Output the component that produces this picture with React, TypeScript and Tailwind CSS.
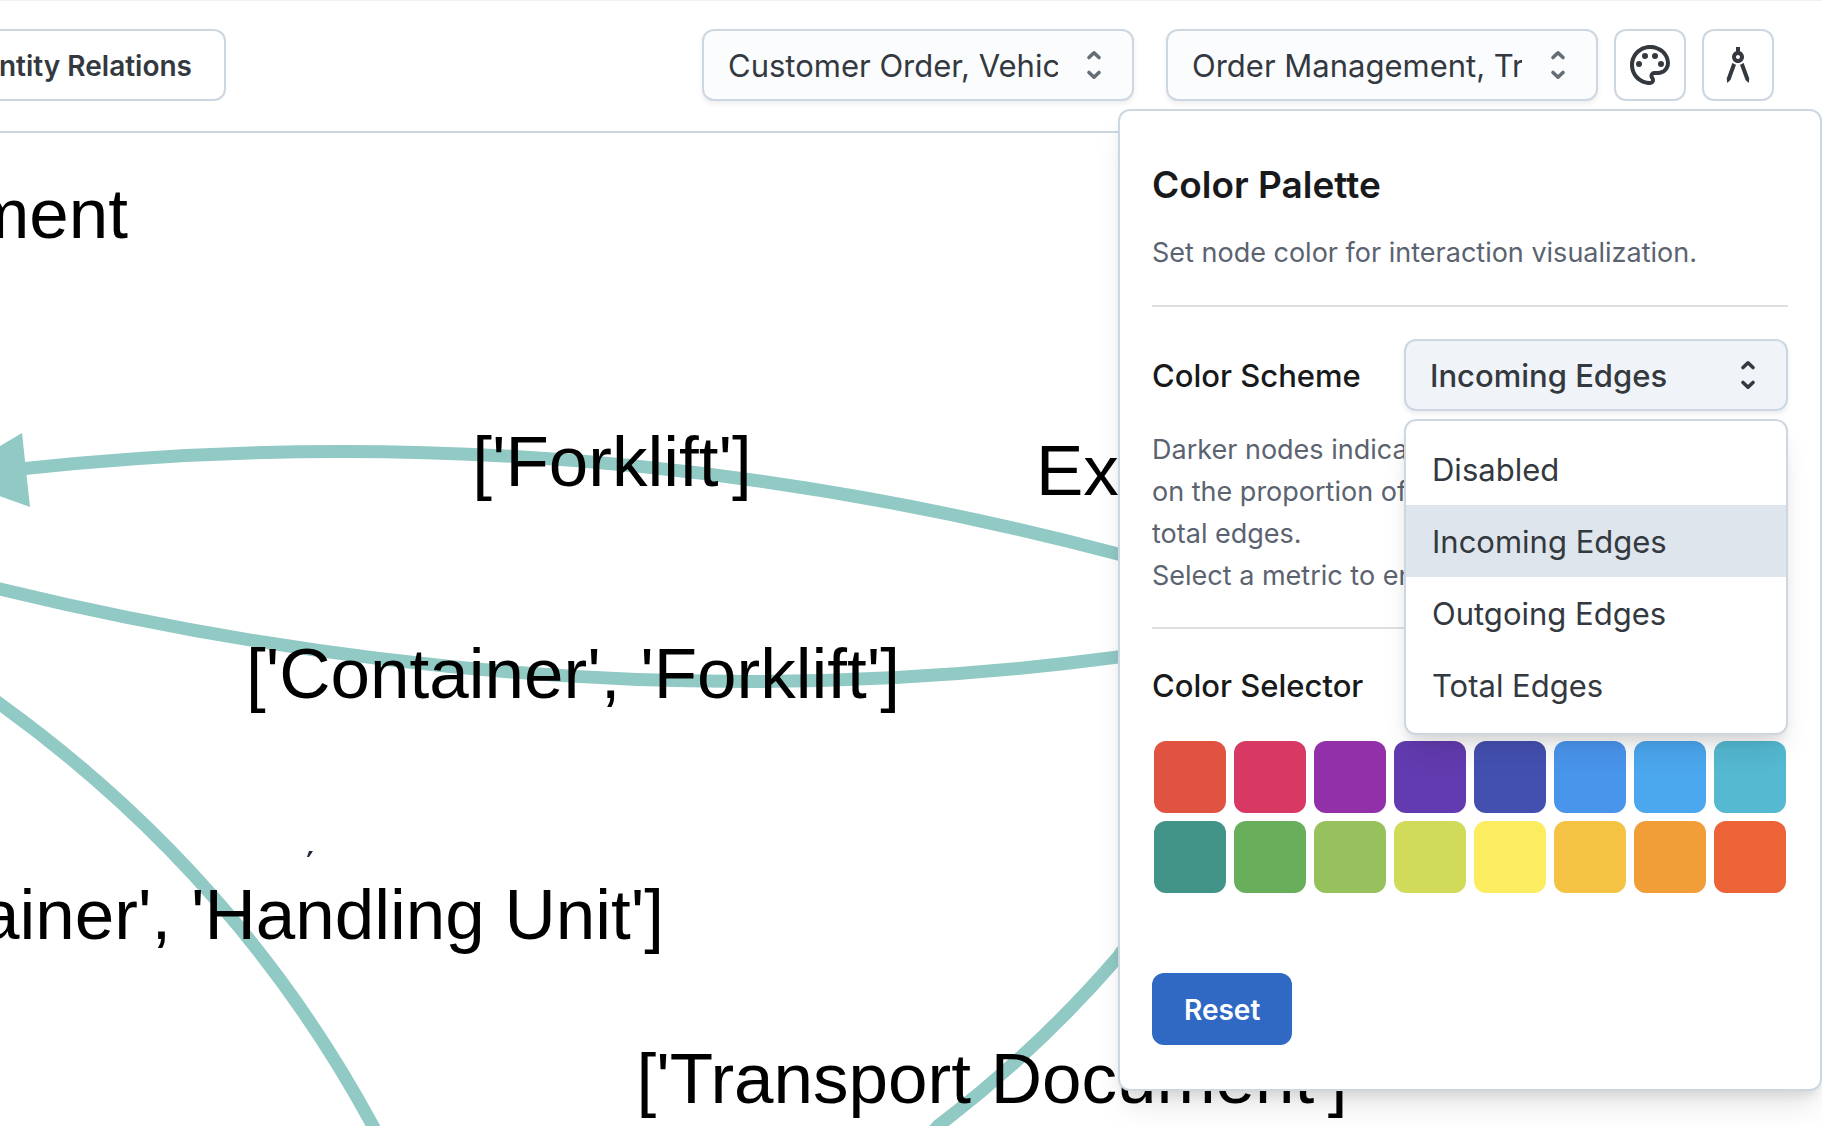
import { useState } from "react";
import { MdArchitecture, MdOutlinePalette } from "react-icons/md";

const EDGE = "#91c9c4";

const swatches = [
  { name: "Red", value: "#e15341" },
  { name: "Pink", value: "#d73964" },
  { name: "Purple", value: "#9130a9" },
  { name: "Deep purple", value: "#623bb0" },
  { name: "Indigo", value: "#4450b0" },
  { name: "Blue", value: "#4995ec" },
  { name: "Light blue", value: "#4ba7ee" },
  { name: "Cyan", value: "#54b9d1" },
  { name: "Teal", value: "#429488" },
  { name: "Green", value: "#68ae5b" },
  { name: "Light green", value: "#97c15d" },
  { name: "Lime", value: "#d0dc59" },
  { name: "Yellow", value: "#fcec60" },
  { name: "Amber", value: "#f5c344" },
  { name: "Orange", value: "#f19e38" },
  { name: "Deep orange", value: "#ec6337" },
];

const schemes = ["Disabled", "Incoming Edges", "Outgoing Edges", "Total Edges"];

function UpDown() {
  return (
    <svg
      viewBox="0 0 20 32"
      className="h-8 w-5"
      fill="none"
      stroke="currentColor"
      strokeWidth="3.6"
      strokeLinecap="round"
      strokeLinejoin="round"
      aria-hidden="true"
    >
      <path d="M5 8.500L10 3.800L15 8.500M5 23.500L10 28.200L15 23.500" />
    </svg>
  );
}

function FilterSelect({ label, value }: { label: string; value: string }) {
  return (
    <div className="relative w-[432px]">
      <select
        aria-label={label}
        defaultValue={value}
        className="h-[72px] w-full appearance-none rounded-xl border-2 border-[#cdd7e2] bg-[#fbfcfe] pt-0.5 pr-[74px] pl-6 text-[31px] text-[#33393f] shadow-[0_3px_5px_rgba(0,0,0,0.07)]"
      >
        <option>{value}</option>
      </select>
      <span className="pointer-events-none absolute inset-y-0 right-[30px] flex items-center text-[#656d75]">
        <UpDown />
      </span>
    </div>
  );
}

function IconButton({ label, children }: { label: string; children: React.ReactNode }) {
  return (
    <button
      type="button"
      aria-label={label}
      className="flex size-[72px] items-center justify-center rounded-xl border-2 border-[#cdd7e2] bg-white text-[#33393f]"
    >
      {children}
    </button>
  );
}

function Graph() {
  return (
    <svg
      className="absolute inset-0 size-full"
      fontFamily='"Liberation Sans", Arial, sans-serif'
      fontSize="71"
      role="img"
      aria-label="Entity relation graph"
    >
      <g transform="translate(0 -133)">
        <g fill="none" stroke={EDGE} strokeWidth="13">
          <path d="M20 469Q571 409 1118 554L1300 604" />
          <path d="M-20 584L0 589Q577 729 1118 657L1200 645" />
          <path d="M-20 690L0 704Q237 875 373 1126L384 1150" />
          <path d="M915 1152L938 1126Q1038 1050 1118 957L1150 912" />
        </g>
        <path d="M22 433L30 507L-53 477Z" fill={EDGE} />
        <g fill="#000">
          <text x="128" y="238" textAnchor="end">Transport Document</text>
          <text x="612" y="486" textAnchor="middle">['Forklift']</text>
          <text x="1036" y="495">Export</text>
          <text x="573" y="698" textAnchor="middle">['Container', 'Forklift']</text>
          <text x="664" y="939" textAnchor="end">['Container', 'Handling Unit']</text>
          <text x="992" y="1103" textAnchor="middle">['Transport Document']</text>
        </g>
        <path d="M309 851H313L309 857H307Z" fill="#1e293b" />
      </g>
    </svg>
  );
}

function PalettePanel() {
  const [scheme, setScheme] = useState("Incoming Edges");
  return (
    <section
      aria-labelledby="palette-title"
      className="absolute top-[109px] right-0 z-10 flex w-[704px] flex-col rounded-xl border-2 border-[#cdd7e2] bg-white px-8 pt-12 pb-11 shadow-[0_20px_30px_-6px_rgba(0,0,0,0.1),0_8px_12px_-4px_rgba(0,0,0,0.1)]"
    >
      <h2 id="palette-title" className="text-[37px] leading-[52px] font-semibold text-[#18191b]">
        Color Palette
      </h2>
      <p className="mt-[22px] text-[27px] leading-10 text-[#5b6370]">
        Set node color for interaction visualization.
      </p>
      <hr className="mt-8 border-t-2 border-[#dedfe1]" />

      <div className="mt-8 flex items-center justify-between">
        <label htmlFor="scheme" className="pt-0.5 text-[31px] font-medium text-[#18191b]">
          Color Scheme
        </label>
        <div className="relative w-96">
          <select
            id="scheme"
            value={scheme}
            onChange={(e) => setScheme(e.target.value)}
            className="h-[72px] w-full appearance-none rounded-xl border-2 border-[#cdd7e2] bg-[#f0f3f8] px-6 pt-0.5 text-[31px] font-medium text-[#33393f] shadow-[0_3px_5px_rgba(0,0,0,0.07)]"
          >
            {schemes.map((s) => (
              <option key={s}>{s}</option>
            ))}
          </select>
          <span className="pointer-events-none absolute inset-y-0 right-[30px] flex items-center text-[#33393f]">
            <UpDown />
          </span>
          <ul
            role="listbox"
            aria-label="Color Scheme"
            className="absolute top-full right-0 left-0 z-20 mt-2 rounded-xl border-2 border-[#cdd7e2] bg-white py-3 shadow-[0_20px_30px_-6px_rgba(0,0,0,0.1),0_8px_12px_-4px_rgba(0,0,0,0.1)]"
          >
            {schemes.map((s) => (
              <li key={s} role="option" aria-selected={s === scheme}>
                <button
                  type="button"
                  onClick={() => setScheme(s)}
                  className={
                    s === scheme
                      ? "block h-[72px] w-full bg-[#dfe5ec] px-[26px] pt-0.5 text-left text-[31px] text-[#33393f]"
                      : "block h-[72px] w-full px-[26px] pt-0.5 text-left text-[31px] text-[#33393f]"
                  }
                >
                  {s}
                </button>
              </li>
            ))}
          </ul>
        </div>
      </div>

      <p className="mt-[18px] text-[27px] leading-[42px] text-[#5b6370]">
        <span className="block">Darker nodes indicate more edges based</span>
        <span className="block">on the proportion of the metric to the</span>
        <span className="block">total edges.</span>
        <span className="block">Select a metric to enable coloring.</span>
      </p>
      <hr className="mt-[30px] border-t-2 border-[#dedfe1]" />

      <h3 className="mt-8 text-[31px] leading-[50px] font-medium text-[#18191b]">Color Selector</h3>
      <div className="mt-[30px] grid grid-cols-8 gap-2 px-0.5">
        {swatches.map((c) => (
          <button
            key={c.name}
            type="button"
            aria-label={c.name}
            className="h-[72px] rounded-xl"
            style={{ backgroundColor: c.value }}
          />
        ))}
      </div>

      <button
        type="button"
        className="mt-20 h-[72px] self-start rounded-xl bg-[#3069c4] px-8 pt-0.5 text-[28px] font-semibold text-white"
      >
        Reset
      </button>
    </section>
  );
}

export default function App() {
  return (
    <div className="relative flex min-h-screen flex-col overflow-hidden bg-white font-['Inter',sans-serif]">
      <header className="flex items-start justify-between border-t border-b-2 border-t-[#f0f0f0] border-b-[#cdd7e2] pt-7 pr-12 pb-[30px]">
        <div className="flex w-[226px] justify-end overflow-hidden">
          <button
            type="button"
            className="h-[72px] shrink-0 rounded-xl border-2 border-[#cdd7e2] bg-white px-8 pt-0.5 text-[28px] font-semibold whitespace-nowrap text-[#33393f]"
          >
            Entity Relations
          </button>
        </div>
        <div className="flex gap-4">
          <div className="flex gap-8">
            <FilterSelect label="Entities" value="Customer Order, Vehicle" />
            <FilterSelect label="Processes" value="Order Management, Transport" />
          </div>
          <IconButton label="Color palette">
            <MdOutlinePalette size={48} />
          </IconButton>
          <IconButton label="Layout">
            <MdArchitecture size={48} />
          </IconButton>
        </div>
      </header>
      <main className="relative flex-1">
        <Graph />
      </main>
      <PalettePanel />
    </div>
  );
}
